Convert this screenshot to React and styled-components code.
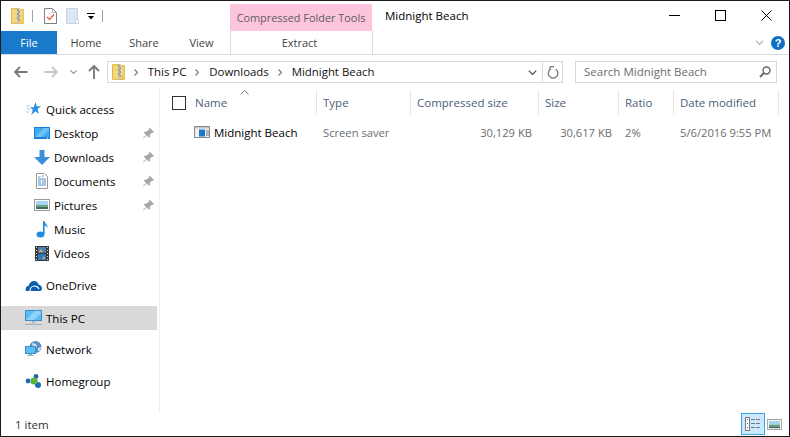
import React from 'react'
import styled, { createGlobalStyle } from 'styled-components'

const GlobalStyle = createGlobalStyle`
  html, body {
    margin: 0;
    padding: 0;
    background: #fff;
  }
  * {
    box-sizing: border-box;
  }
`

const Window = styled.div`
  width: 790px;
  height: 437px;
  border: 1px solid #1a1a1a;
  background: #fff;
  display: flex;
  flex-direction: column;
  overflow: hidden;
  font-family: "Open Sans", "Noto Sans", sans-serif;
  font-size: 11.5px;
  color: #000;
`

const TitleBar = styled.div`
  height: 30px;
  display: flex;
  align-items: flex-start;
  flex-shrink: 0;
`

const QuickAccess = styled.div`
  width: 229px;
  height: 30px;
  display: flex;
  align-items: center;
  padding-left: 10px;
`

const QatSep = styled.span`
  width: 1px;
  height: 12px;
  background: #a0a0a0;
  margin: ${p => p.$margin};
`

const QatGap = styled.span`
  width: ${p => p.$width}px;
  flex-shrink: 0;
`

const ContextTitle = styled.div`
  width: 142px;
  height: 27px;
  margin-top: 3px;
  background: #fcc5dd;
  color: #5c5c5c;
  font-size: 10.9px;
  display: flex;
  align-items: center;
  justify-content: center;
`

const WindowTitle = styled.div`
  margin-left: 13px;
  line-height: 30px;
  font-size: 11.5px;
  flex: 1;
`

const WindowButtons = styled.div`
  display: flex;
  width: 138px;
  height: 30px;
`

const WindowButton = styled.div`
  flex: 1;
  display: flex;
  align-items: center;
  justify-content: center;
  padding-bottom: 1px;
`

const RibbonTabs = styled.div`
  height: 24px;
  display: flex;
  align-items: stretch;
  border-bottom: 1px solid #dadbdc;
  flex-shrink: 0;
`

const FileTab = styled.div`
  width: 56px;
  background: #1979ca;
  color: #fff;
  display: flex;
  align-items: center;
  justify-content: center;
  font-size: 11px;
`

const RibbonTab = styled.div`
  width: ${p => p.$width}px;
  display: flex;
  align-items: center;
  justify-content: center;
  color: #444;
  font-size: 11px;
`

const ExtractTab = styled(RibbonTab)`
  border-left: 1px solid #dadbdc;
  border-right: 1px solid #dadbdc;
  padding-right: 4px;
`

const RibbonEnd = styled.div`
  flex: 1;
  display: flex;
  align-items: center;
  justify-content: flex-end;
  gap: 7px;
  padding-right: 4px;
`

const HelpBadge = styled.div`
  width: 14px;
  height: 14px;
  border-radius: 50%;
  background: #0f6fc6;
  color: #fff;
  font-family: "Liberation Sans", sans-serif;
  font-weight: 700;
  font-size: 11px;
  line-height: 14px;
  text-align: center;
`

const AddressRow = styled.div`
  height: 34px;
  display: flex;
  align-items: center;
  flex-shrink: 0;
`

const NavButtons = styled.div`
  width: 106px;
  height: 22px;
  display: flex;
  align-items: center;
`

const AddressBar = styled.div`
  width: 456px;
  height: 22px;
  border: 1px solid #d9d9d9;
  display: flex;
  align-items: center;
  padding-left: 4px;
`

const Crumb = styled.span`
  color: #111;
  font-size: 11.4px;
  padding-bottom: 2px;
`

const CrumbArrow = styled.svg`
  margin: 0 10px 0 9px;
  flex-shrink: 0;
`

const AddressEnd = styled.div`
  margin-left: auto;
  display: flex;
  align-items: center;
  height: 20px;
`

const RefreshCell = styled.div`
  width: 20px;
  height: 20px;
  margin-left: 5px;
  border-left: 1px solid #d9d9d9;
  display: flex;
  align-items: center;
  justify-content: center;
`

const SearchBox = styled.div`
  width: 202px;
  height: 22px;
  margin-left: 12px;
  border: 1px solid #d9d9d9;
  display: flex;
  align-items: center;
  justify-content: space-between;
  padding: 0 5px 0 8px;
  color: #6d6d6d;
  font-size: 11.5px;
`

const SearchHint = styled.span`
  padding-bottom: 2px;
`

const Main = styled.div`
  flex: 1;
  display: flex;
  min-height: 0;
`

const Sidebar = styled.nav`
  width: 159px;
  border-right: 1px solid #f0f0f0;
  padding: 8px 2px 0 0;
  flex-shrink: 0;
`

const NavGroup = styled.div`
  margin-bottom: ${p => p.$gap ?? 8}px;
`

const NavRow = styled.div`
  height: 24px;
  display: flex;
  align-items: center;
  padding-left: ${p => (p.$child ? 32 : 24)}px;
  background: ${p => (p.$selected ? '#d9d9d9' : 'transparent')};
`

const NavIcon = styled.span`
  width: 17px;
  height: 17px;
  margin-right: 4px;
  display: flex;
  align-items: center;
  justify-content: center;
  flex-shrink: 0;
`

const NavPin = styled.span`
  margin-left: auto;
  margin-right: 3px;
  display: flex;
`

const Content = styled.div`
  flex: 1;
  min-width: 0;
`

const ColumnGrid = styled.div`
  display: grid;
  grid-template-columns: 157px 94px 128px 80px 55px 105px;
`

const Header = styled(ColumnGrid)`
  height: 25px;
  margin-top: 1px;
  color: #4c607a;
  font-size: 11.5px;
`

const HeaderCell = styled.div`
  position: relative;
  border-right: 1px solid #e5e5e5;
  padding-left: 6px;
  display: flex;
  align-items: center;
`

const NameHeader = styled(HeaderCell)`
  padding-left: 12px;
`

const HeadCheck = styled.span`
  width: 14px;
  height: 14px;
  border: 1px solid #333;
  margin-right: 9px;
`

const SortCaret = styled.svg`
  position: absolute;
  left: 80px;
  top: 0;
`

const FileRow = styled(ColumnGrid)`
  height: 24px;
  margin-top: 5px;
  align-items: center;
  color: #6d6d6d;
  font-size: 11.2px;
`

const NameCell = styled.div`
  display: flex;
  align-items: center;
  padding-left: 34px;
  color: #000;
  font-size: 11.5px;
`

const TextCell = styled.div`
  padding-left: 6px;
  white-space: nowrap;
`

const NumCell = styled.div`
  text-align: right;
  padding-right: 7px;
  white-space: nowrap;
`

const StatusBar = styled.div`
  height: 24px;
  display: flex;
  align-items: center;
  flex-shrink: 0;
  padding-left: 14px;
  color: #333;
  font-size: 11.5px;
`

const StatusViews = styled.div`
  margin-left: auto;
  margin-right: 7px;
  display: flex;
  align-items: center;
  gap: 2px;
`

const ViewButton = styled.div`
  width: ${p => p.$width}px;
  height: 22px;
  display: flex;
  align-items: center;
  justify-content: center;
  background: ${p => (p.$active ? '#cce8ff' : 'transparent')};
  border: ${p => (p.$active ? '1px solid #3ba9e0' : 'none')};
`

const ZipIcon = ({ size = 16 }) => (
  <svg width={size * 0.8} height={size} viewBox="0 0 13 16">
    <path d="M.5.5h8l1 1h3v14H.5z" fill="#f6d77a" stroke="#d9b64a" />
    <rect x="6" y="1" width="3" height="14" fill="#c8c8c8" />
    <path d="M6 2h1.5M7.5 4H9M6 6h1.5M7.5 8H9M6 10h1.5M7.5 12H9" stroke="#555" />
    <rect x="9.5" y="11" width="3" height="4" fill="#f9c84a" />
  </svg>
)

const CheckDoc = () => (
  <svg width="13" height="16" viewBox="0 0 13 16">
    <path d="M.5.5h8l4 4v11H.5z" fill="#fff" stroke="#7f7f7f" />
    <path d="M8.500.5v4h4" fill="none" stroke="#b0b0b0" />
    <path d="M3 9l2.500 2.500L10 6.500" fill="none" stroke="#e8643c" strokeWidth="1.400" />
  </svg>
)

const BlankFolder = () => (
  <svg width="13" height="16" viewBox="0 0 13 16">
    <path d="M.5.5h11v15H.5z" fill="#dbe5f3" stroke="#c7d5ea" />
    <path d="M9.500 15.500v-4h3v4z" fill="#fff" stroke="#c7d5ea" />
  </svg>
)

const QatDrop = () => (
  <svg width="8" height="7" viewBox="0 0 8 7">
    <path d="M0 .5h8" stroke="#000" />
    <path d="M1 3h6L4 6.500z" fill="#000" />
  </svg>
)

const Star = () => (
  <svg width="16" height="14" viewBox="0 0 16 14">
    <path d="M9.500 0l1.300 4.300H15l-3.400 2.800 1.300 4.900L9.500 9.200 5.200 13l1.600-5.200L4 5.200h3.800z" fill="#2c8fe0" />
    <path d="M0 4h4M1 7h3M0 10h3" stroke="#9ccbf0" />
  </svg>
)

const Desktop = () => (
  <svg width="16" height="14" viewBox="0 0 16 14">
    <rect x="0" y="1" width="16" height="12" fill="#1a7fd6" />
    <rect x="1" y="2" width="14" height="9" fill="#3fa9f5" />
    <path d="M1 11l9-9h5v2l-7 7z" fill="#6cc0f8" />
    <rect x="13" y="11.500" width="1" height="1" fill="#fff" />
  </svg>
)

const DownArrow = () => (
  <svg width="16" height="16" viewBox="0 0 16 16">
    <path d="M5.500 1h5v7H16l-8 8-8-8h5.500z" fill="#3d8edb" />
  </svg>
)

const DocIcon = () => (
  <svg width="12" height="16" viewBox="0 0 12 16">
    <path d="M.5.5h8l3 3v12H.5z" fill="#fff" stroke="#9a9a9a" />
    <path d="M6 3h2M2 6h8M2 8h3M6 8h4M2 10h3M6 10h4M2 12h8" stroke="#4c8fc9" />
    <path d="M2.500 3.500h2v1h-2z" fill="#4c8fc9" />
  </svg>
)

const Picture = ({ w = 16, h = 12 }) => (
  <svg width={w} height={h} viewBox="0 0 16 12">
    <rect x=".5" y=".5" width="15" height="11" fill="#fff" stroke="#9a9a9a" />
    <rect x="2" y="2" width="12" height="4" fill="#a8d4ee" />
    <rect x="2" y="6" width="12" height="2" fill="#6da58a" />
    <rect x="2" y="8" width="12" height="2" fill="#3f6b5d" />
  </svg>
)

const MusicNote = () => (
  <svg width="12" height="17" viewBox="0 0 12 17">
    <ellipse cx="4.500" cy="13.500" rx="4" ry="3" fill="#1f8be0" />
    <path d="M7 13V0h1.400c.4 2.500 3.600 3.600 3 7.500-.5-2-2-3-2.800-3.200V13z" fill="#1f8be0" />
  </svg>
)

const Film = () => (
  <svg width="14" height="15" viewBox="0 0 14 15">
    <rect width="14" height="15" fill="#3a3a3a" />
    <rect x="3" y="1" width="8" height="6" fill="#4d7fb0" />
    <rect x="3" y="8" width="8" height="6" fill="#2e79c2" />
    <path d="M4 6l2-3 2 3zM7 13l2-3 1 3z" fill="#e8b13a" />
    <path d="M1 1.500h1M1 4.500h1M1 7.500h1M1 10.500h1M1 13.500h1M12 1.500h1M12 4.500h1M12 7.500h1M12 10.500h1M12 13.500h1" stroke="#ddd" />
  </svg>
)

const Cloud = () => (
  <svg width="17" height="11" viewBox="0 0 17 11">
    <path d="M1 10.500C0 8 1.500 6 3.500 6 4 3 6.500 1 9 1c2.500 0 4 1.500 4.500 3.500C15.500 5 17 6.500 17 8.500 17 10 16 11 15 11H1z" fill="#0c5fb0" />
    <path d="M5 11c0-3 2-5 4.500-5 2 0 3.500 1 4.500 3" fill="none" stroke="#fff" strokeWidth="1.200" />
  </svg>
)

const Computer = () => (
  <svg width="17" height="16" viewBox="0 0 17 16">
    <rect x=".5" y=".5" width="16" height="10" fill="#5cbcf6" stroke="#3a8ccc" />
    <path d="M1 10L10 1h6v2l-7 7z" fill="#8dd3fb" />
    <rect x="7" y="11" width="3" height="2" fill="#aab8c4" />
    <rect x="0" y="14" width="17" height="1" fill="#9fb0bf" />
    <rect x="4" y="13" width="9" height="1" fill="#c4ced6" />
  </svg>
)

const NetworkIcon = () => (
  <svg width="17" height="16" viewBox="0 0 17 16">
    <circle cx="10.500" cy="6" r="6" fill="#5d8fc4" />
    <path d="M7 2l4 1 1 3-4 1zM13 7l3-1-1 4-2 0z" fill="#cfdfef" />
    <rect x=".5" y="5.500" width="10" height="7" fill="#5cbcf6" stroke="#3a8ccc" />
    <rect x="4" y="13" width="3" height="1" fill="#9fb0bf" />
    <rect x="2" y="14" width="7" height="1" fill="#9fb0bf" />
  </svg>
)

const Homegroup = () => (
  <svg width="17" height="14" viewBox="0 0 17 14">
    <circle cx="3" cy="7" r="2.400" fill="#1d69b8" />
    <circle cx="11" cy="2.500" r="2.400" fill="#1d69b8" />
    <circle cx="13" cy="11" r="3" fill="#1d69b8" />
    <circle cx="9" cy="7" r="3.600" fill="#5db13e" />
  </svg>
)

const Pin = () => (
  <svg width="11" height="11" viewBox="0 0 11 11">
    <path d="M7 0l4 4-1 1-1-.300-2.300 2.300.3 1.800-1 1-2.400-2.400L.500 10.500 0 10l3.100-3.100L.8 4.500l1-1 1.800.3L5.900 1.500 5.800.800z" fill="#a6a6a6" />
  </svg>
)

const BackArrow = ({ color, flip }) => (
  <svg width="14" height="12" viewBox="0 0 14 12" style={flip ? { transform: 'scaleX(-1)' } : undefined}>
    <path d="M6 1L1 6l5 5M1 6h12.500" fill="none" stroke={color} strokeWidth="1.800" />
  </svg>
)

const UpArrow = () => (
  <svg width="12" height="14" viewBox="0 0 12 14">
    <path d="M1 6l5-5 5 5M6 1v13" fill="none" stroke="#777" strokeWidth="1.800" />
  </svg>
)

const Chevron = ({ color = '#666', w = 7, h = 4 }) => (
  <svg width={w} height={h} viewBox="0 0 7 4">
    <path d="M.5.500L3.500 3.500 6.500.500" fill="none" stroke={color} strokeWidth="1.100" />
  </svg>
)

const RightChevron = () => (
  <CrumbArrow width="4" height="7" viewBox="0 0 4 7">
    <path d="M.5.500l3 3-3 3" fill="none" stroke="#777" strokeWidth="1.100" />
  </CrumbArrow>
)

const Refresh = () => (
  <svg width="12" height="13" viewBox="0 0 12 13">
    <path d="M3.600 3.200a4.800 4.800 0 1 0 5 0" fill="none" stroke="#7a7a7a" strokeWidth="1.300" />
    <path d="M3 .500h4M3 .500v3.500" fill="none" stroke="#7a7a7a" strokeWidth="1.300" />
  </svg>
)

const SearchGlass = () => (
  <svg width="12" height="12" viewBox="0 0 12 12">
    <circle cx="7.500" cy="4.500" r="3.500" fill="none" stroke="#666" strokeWidth="1.400" />
    <path d="M5 7l-4 4" stroke="#666" strokeWidth="1.800" />
  </svg>
)

const ScreensaverIcon = () => (
  <svg width="16" height="12" viewBox="0 0 16 12" style={{ marginRight: 4 }}>
    <rect x=".5" y=".5" width="15" height="11" fill="#f0f0f0" stroke="#8a8a8a" />
    <rect x="1" y="1" width="14" height="1.500" fill="#c4c4c4" />
    <rect x="5" y="3.500" width="6" height="7" fill="#1a78d0" />
    <path d="M12 5h3M12 7h3M12 9h3" stroke="#777" />
  </svg>
)

const DetailsViewIcon = () => (
  <svg width="16" height="14" viewBox="0 0 16 14">
    <rect x=".5" y=".5" width="4" height="13" fill="#fff" stroke="#777" />
    <rect x="2" y="2" width="1" height="1" fill="#3a6fb0" />
    <rect x="2" y="6" width="1" height="1" fill="#3a8a50" />
    <rect x="2" y="10" width="1" height="1" fill="#c03030" />
    <path d="M6 2.500h4M11 2.500h4M6 6.500h4M11 6.500h4M6 10.500h4M11 10.500h4" stroke="#777" />
  </svg>
)

const quickItems = [
  { label: 'Desktop', icon: <Desktop />, pin: true },
  { label: 'Downloads', icon: <DownArrow />, pin: true },
  { label: 'Documents', icon: <DocIcon />, pin: true },
  { label: 'Pictures', icon: <Picture />, pin: true },
  { label: 'Music', icon: <MusicNote /> },
  { label: 'Videos', icon: <Film /> },
]

const App = () => (
  <>
    <GlobalStyle />
    <Window>
      <TitleBar>
        <QuickAccess>
          <ZipIcon />
          <QatSep $margin="0 11px 0 8px" />
          <CheckDoc />
          <QatGap $width={9} />
          <BlankFolder />
          <QatGap $width={8} />
          <QatDrop />
          <QatSep $margin="0 0 0 7px" />
        </QuickAccess>
        <ContextTitle>Compressed Folder Tools</ContextTitle>
        <WindowTitle>Midnight Beach</WindowTitle>
        <WindowButtons>
          <WindowButton>
            <svg width="11" height="11" viewBox="0 0 11 11"><path d="M0 5.500h11" stroke="#000" /></svg>
          </WindowButton>
          <WindowButton>
            <svg width="11" height="11" viewBox="0 0 11 11"><rect x=".5" y=".5" width="10" height="10" fill="none" stroke="#000" /></svg>
          </WindowButton>
          <WindowButton>
            <svg width="11" height="11" viewBox="0 0 11 11"><path d="M.5.500l10 10M10.500.500l-10 10" stroke="#000" /></svg>
          </WindowButton>
        </WindowButtons>
      </TitleBar>

      <RibbonTabs>
        <FileTab>File</FileTab>
        <RibbonTab $width={58}>Home</RibbonTab>
        <RibbonTab $width={58}>Share</RibbonTab>
        <RibbonTab $width={57}>View</RibbonTab>
        <ExtractTab $width={143}>Extract</ExtractTab>
        <RibbonEnd>
          <Chevron color="#b5b5b5" w={9} h={5} />
          <HelpBadge>?</HelpBadge>
        </RibbonEnd>
      </RibbonTabs>

      <AddressRow>
        <NavButtons>
          <QatGap $width={13} />
          <BackArrow color="#777" />
          <QatGap $width={16} />
          <BackArrow color="#c8c8c8" flip />
          <QatGap $width={12} />
          <Chevron color="#999" />
          <QatGap $width={11} />
          <UpArrow />
        </NavButtons>
        <AddressBar>
          <ZipIcon />
          <RightChevron />
          <Crumb>This PC</Crumb>
          <RightChevron />
          <Crumb>Downloads</Crumb>
          <RightChevron />
          <Crumb>Midnight Beach</Crumb>
          <AddressEnd>
            <Chevron color="#555" w={9} h={5} />
            <RefreshCell>
              <Refresh />
            </RefreshCell>
          </AddressEnd>
        </AddressBar>
        <SearchBox>
          <SearchHint>Search Midnight Beach</SearchHint>
          <SearchGlass />
        </SearchBox>
      </AddressRow>

      <Main>
        <Sidebar>
          <NavGroup>
            <NavRow>
              <NavIcon><Star /></NavIcon>
              Quick access
            </NavRow>
            {quickItems.map(item => (
              <NavRow $child key={item.label}>
                <NavIcon>{item.icon}</NavIcon>
                {item.label}
                {item.pin && <NavPin><Pin /></NavPin>}
              </NavRow>
            ))}
          </NavGroup>
          <NavGroup $gap={9}>
            <NavRow>
              <NavIcon><Cloud /></NavIcon>
              OneDrive
            </NavRow>
          </NavGroup>
          <NavGroup $gap={7}>
            <NavRow $selected>
              <NavIcon><Computer /></NavIcon>
              This PC
            </NavRow>
          </NavGroup>
          <NavGroup>
            <NavRow>
              <NavIcon><NetworkIcon /></NavIcon>
              Network
            </NavRow>
          </NavGroup>
          <NavGroup>
            <NavRow>
              <NavIcon><Homegroup /></NavIcon>
              Homegroup
            </NavRow>
          </NavGroup>
        </Sidebar>

        <Content>
          <Header>
            <NameHeader>
              <HeadCheck />
              Name
              <SortCaret width="9" height="5" viewBox="0 0 9 5">
                <path d="M.5 4.500l4-4 4 4" fill="none" stroke="#777" />
              </SortCaret>
            </NameHeader>
            <HeaderCell>Type</HeaderCell>
            <HeaderCell>Compressed size</HeaderCell>
            <HeaderCell>Size</HeaderCell>
            <HeaderCell>Ratio</HeaderCell>
            <HeaderCell>Date modified</HeaderCell>
          </Header>
          <FileRow>
            <NameCell>
              <ScreensaverIcon />
              Midnight Beach
            </NameCell>
            <TextCell>Screen saver</TextCell>
            <NumCell>30,129 KB</NumCell>
            <NumCell>30,617 KB</NumCell>
            <TextCell>2%</TextCell>
            <TextCell>5/6/2016 9:55 PM</TextCell>
          </FileRow>
        </Content>
      </Main>

      <StatusBar>
        1 item
        <StatusViews>
          <ViewButton $active $width={24}><DetailsViewIcon /></ViewButton>
          <ViewButton $width={15}><Picture w={15} h={11} /></ViewButton>
        </StatusViews>
      </StatusBar>
    </Window>
  </>
)

export default App
